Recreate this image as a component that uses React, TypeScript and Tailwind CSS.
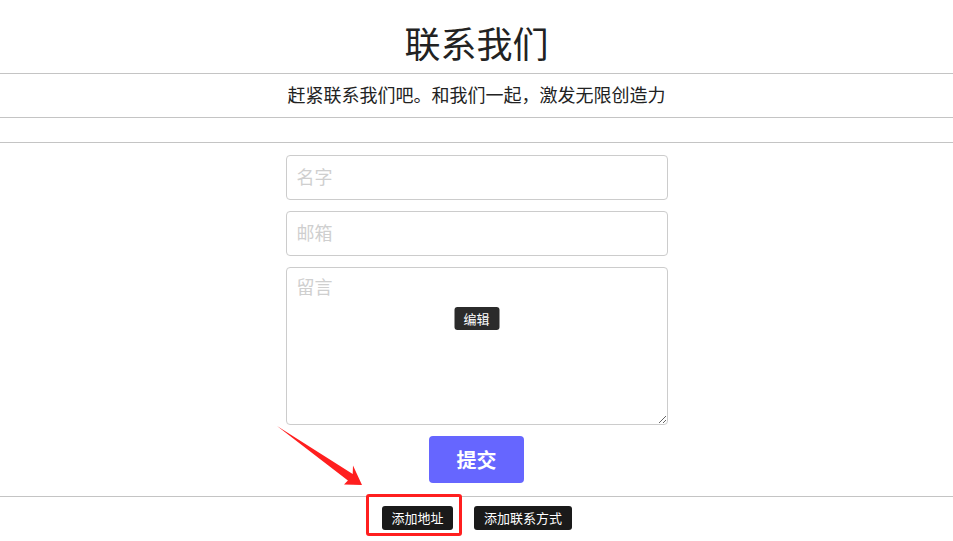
import React from 'react';

const font = { fontFamily: '"Noto Sans CJK SC", "Noto Sans", sans-serif' };

const ContactForm: React.FC = () => (
  <form className="mx-auto mt-3 flex w-[382px] flex-col gap-[11px]" onSubmit={(e) => e.preventDefault()}>
    <input
      placeholder="名字"
      className="h-[45px] w-full rounded border border-[#cccccc] px-[10px] pb-[4px] text-[18px] text-[#333] outline-none placeholder:text-[#cfcfcf]"
    />
    <input
      placeholder="邮箱"
      className="h-[45px] w-full rounded border border-[#cccccc] px-[10px] pb-[4px] text-[18px] text-[#333] outline-none placeholder:text-[#cfcfcf]"
    />
    <div className="relative">
      <textarea
        placeholder="留言"
        className="block h-[158px] w-full resize rounded border border-[#cccccc] px-[10px] py-[5px] text-[18px] text-[#333] outline-none placeholder:text-[#cfcfcf]"
      />
      <button
        type="button"
        className="absolute left-1/2 top-[40px] flex h-[23px] w-[45px] -translate-x-1/2 items-center justify-center rounded-[3px] bg-[#2b2b2b] text-[13px] text-white"
      >
        编辑
      </button>
    </div>
    <div className="flex justify-center">
      <button
        type="submit"
        className="h-[47px] w-[95px] rounded bg-[#6666ff] text-[20px] font-bold text-white"
      >
        提交
      </button>
    </div>
  </form>
);

export default function App() {
  return (
    <div className="relative min-h-[541px] bg-white text-[#222]" style={font}>
      <div className="flex h-[73px] items-center justify-center pt-[10px]">
        <h1 className="text-[36px] leading-none font-normal">联系我们</h1>
      </div>
      <hr className="border-t border-[#c4c4c4]" />
      <p className="flex h-[43px] items-center justify-center pb-[3px] text-[18px]">
        赶紧联系我们吧。和我们一起，激发无限创造力
      </p>
      <hr className="border-t border-[#c4c4c4]" />
      <div className="h-[24px]" />
      <hr className="border-t border-[#c4c4c4]" />

      <ContactForm />

      <hr className="mt-[13px] border-t border-[#c4c4c4]" />
      <div className="mt-[9px] flex justify-center gap-[21px] pl-[1px]">
        <button className="h-[24px] w-[71px] rounded-[3px] bg-[#1a1a1a] text-[13px] text-white">添加地址</button>
        <button className="h-[24px] w-[98px] rounded-[3px] bg-[#1a1a1a] text-[13px] text-white">添加联系方式</button>
      </div>

      {/* annotation: highlight box + pointer arrow */}
      <div className="pointer-events-none absolute left-[366px] top-[494px] h-[42px] w-[96px] rounded-[3px] border-[3px] border-[#ff1f1f]" />
      <svg className="pointer-events-none absolute left-0 top-0" width="953" height="541">
        <polygon
          points="277,426 352.7,474 353,465.5 362,485 344,484.5 347.9,480.5"
          fill="#ff1f1f"
        />
      </svg>
    </div>
  );
}
